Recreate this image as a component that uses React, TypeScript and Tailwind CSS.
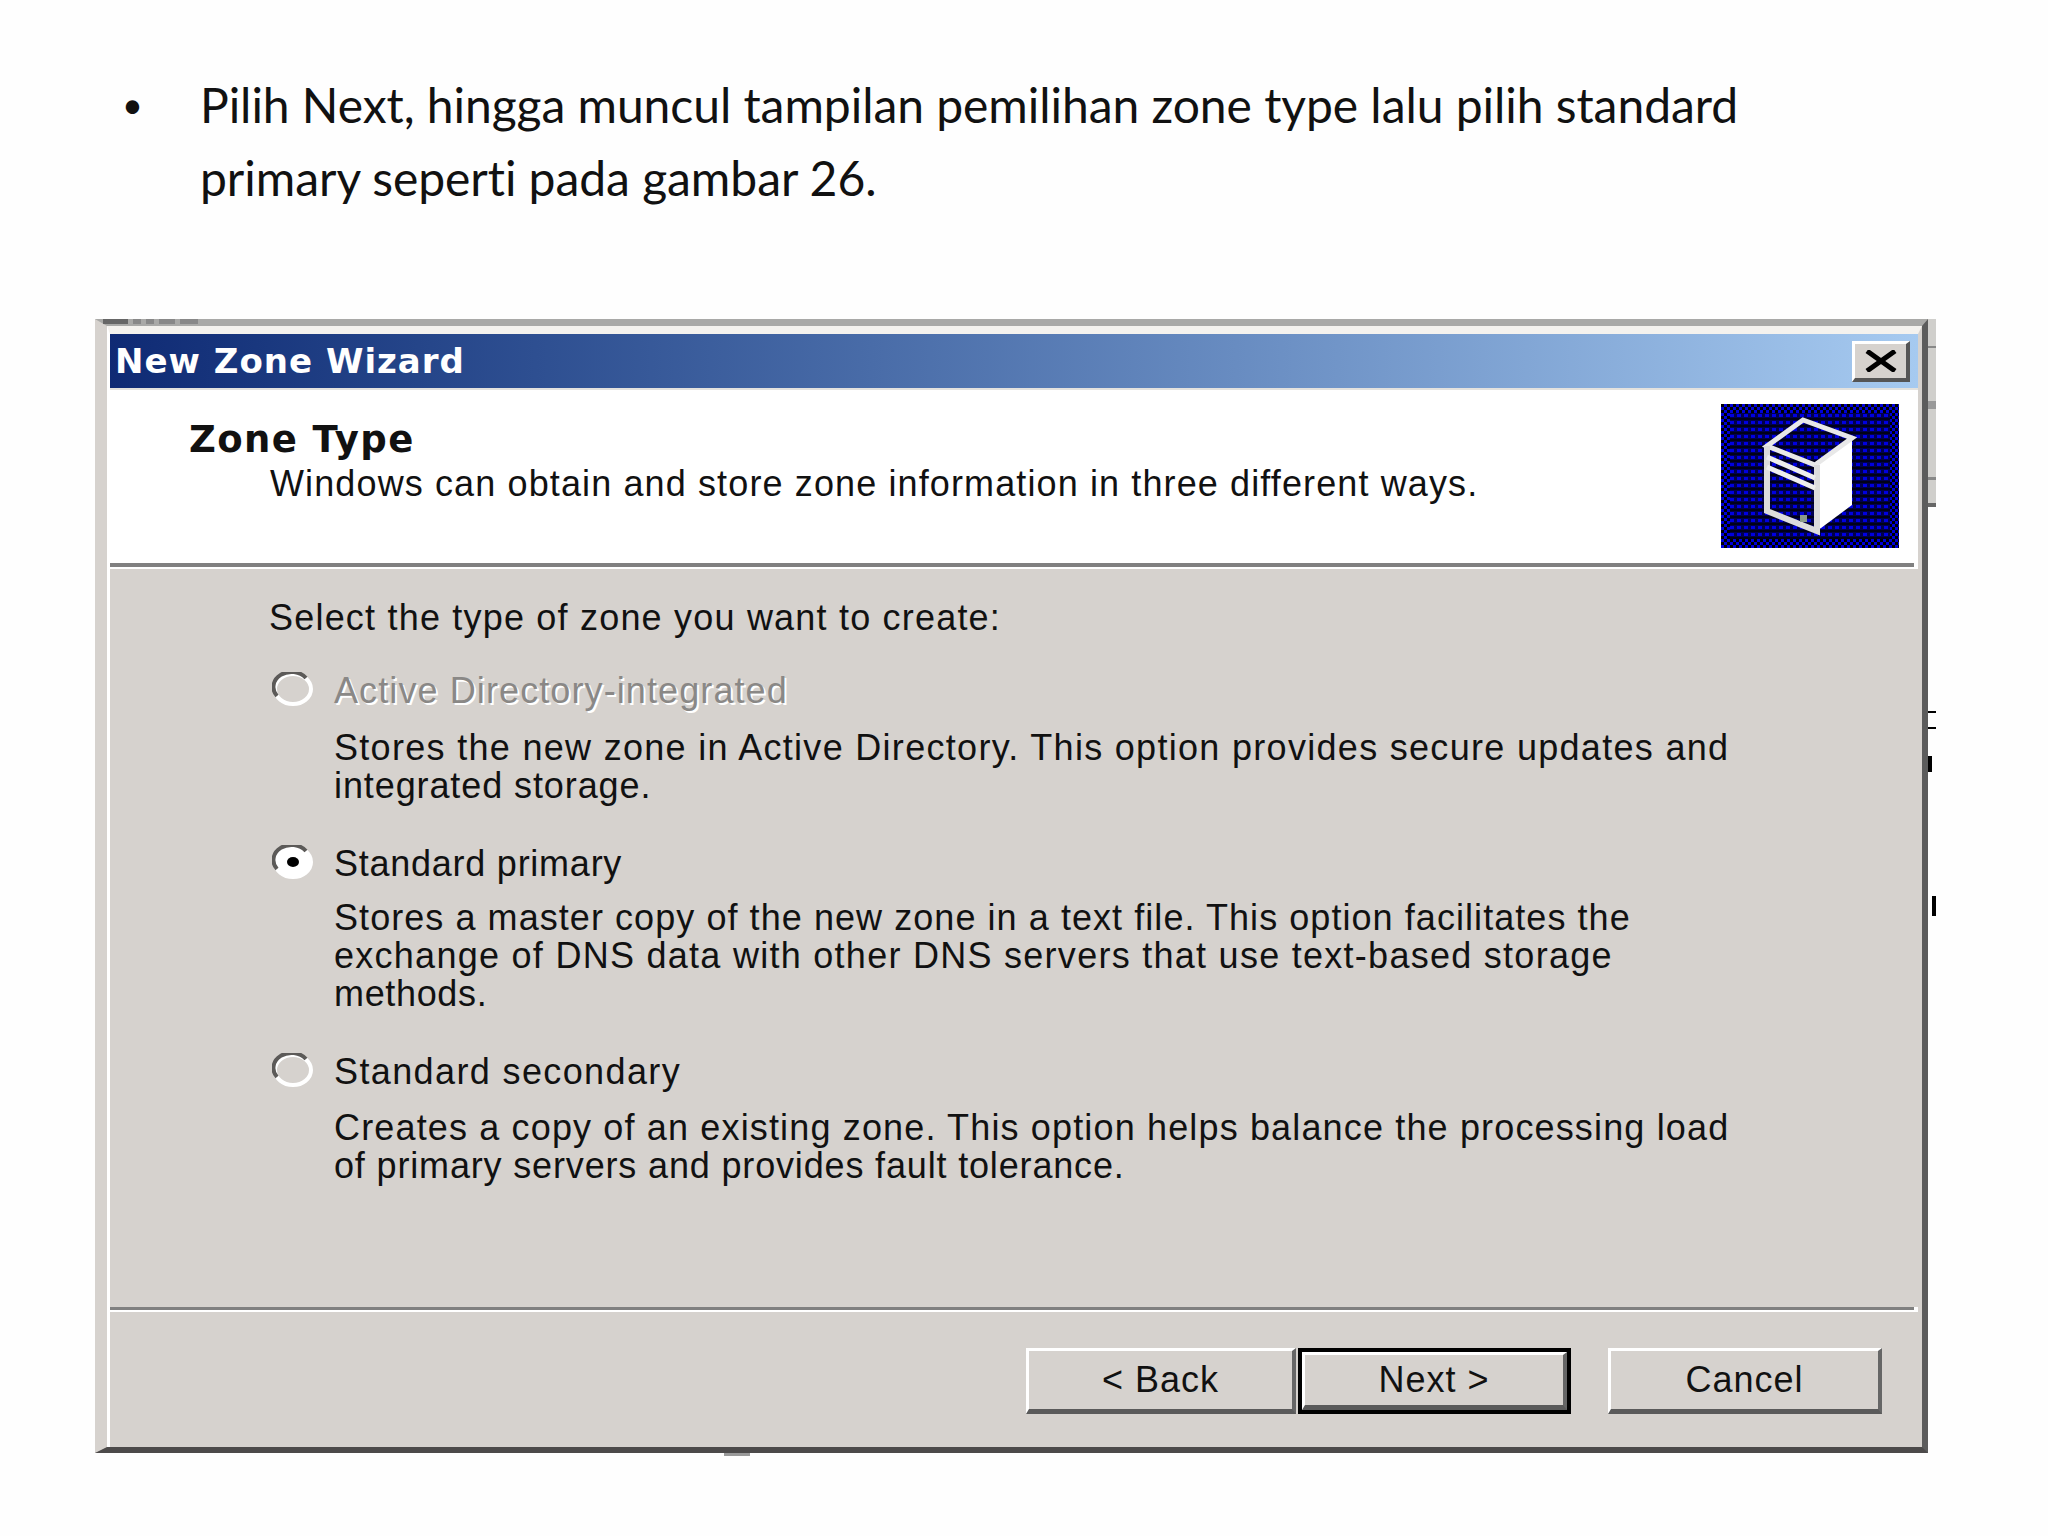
import React from "react";

const DIALOG_FONT = "font-['Liberation_Sans',sans-serif] text-[36px] leading-[38px] text-[#111] whitespace-nowrap";

function Radio({ checked }: { checked?: boolean }) {
  return (
    <svg width="42" height="34" viewBox="0 0 42 34" className="shrink-0 ml-[3px] mr-[20px]">
      <ellipse cx="21" cy="17" rx="18" ry="15" fill={checked ? "#fff" : "#d6d2ce"} stroke="#fff" strokeWidth="4" />
      <path d="M5 24 A18 15 0 0 1 34 6" fill="none" stroke="#5c5a58" strokeWidth="4" />
      {checked && <ellipse cx="21" cy="17" rx="6" ry="5" fill="#000" />}
    </svg>
  );
}

function ServerIcon() {
  return (
    <svg width="178" height="144" viewBox="0 0 178 144" className="shrink-0">
      <defs>
        <pattern id="edge" width="6" height="6" patternUnits="userSpaceOnUse">
          <rect width="6" height="6" fill="#0000d8" />
          <rect width="3" height="3" fill="#000" />
          <rect x="3" y="3" width="3" height="3" fill="#000" />
        </pattern>
        <pattern id="dither" width="7" height="7" patternUnits="userSpaceOnUse">
          <rect width="7" height="7" fill="#00004c" />
          <rect x="0" y="0" width="7" height="2" fill="#000018" />
          <rect x="2" y="3" width="4" height="3" fill="#0000e0" />
        </pattern>
      </defs>
      <rect width="178" height="144" fill="url(#edge)" />
      <rect x="9" y="9" width="160" height="126" fill="url(#dither)" />
      <polygon points="94,61 131,34 131,101 96,127" fill="#fff" />
      <path d="M46 42 L82 16 L131 34 L94 61 Z" fill="none" stroke="#e8e8e8" strokeWidth="5" />
      <path d="M46 42 L46 107 L96 127 L96 61" fill="none" stroke="#dcdcdc" strokeWidth="6" />
      <path d="M46 53 L94 74 M46 63 L94 84" stroke="#eee" strokeWidth="5" />
      <rect x="79" y="111" width="7" height="7" fill="#8a9a8a" />
    </svg>
  );
}

function WizardButton({ label, isDefault, className }: { label: string; isDefault?: boolean; className: string }) {
  return (
    <div className={`h-[66px] ${isDefault ? "border-[4px] border-black" : ""} ${className}`}>
      <div className="h-full flex items-center justify-center border-t-[3px] border-l-[3px] border-t-white border-l-white border-r-[4px] border-b-[5px] border-r-[#666] border-b-[#5a5a5a]">
        <span className={`${DIALOG_FONT} tracking-[1px]`}>{label}</span>
      </div>
    </div>
  );
}

export default function App() {
  return (
    <div className="w-[2048px] h-[1536px] bg-[#fefefe] overflow-hidden">
      {/* Slide text */}
      <div className="flex pl-[122px] pt-[68px] h-[319px] font-['Lato',sans-serif] text-[48px] tracking-[-0.05px] leading-[73px] text-[#111] [font-variant-ligatures:none]">
        <div className="w-[78px] text-[36px]">•</div>
        <div className="whitespace-nowrap">
          <div>Pilih Next, hingga muncul tampilan pemilihan zone type lalu pilih standard</div>
          <div>primary seperti pada gambar 26.</div>
        </div>
      </div>

      {/* Screenshot of the wizard dialog */}
      <div className="relative ml-[95px] w-[1833px] h-[1134px] border-t-[7px] border-t-[#a9a9a7] border-l-[12px] border-l-[#d6d2ce] border-r-[6px] border-r-[#5c5c5c] border-b-[6px] border-b-[#4c4a4a]">
        <div className="h-full flex flex-col border-t-[8px] border-t-[#f4f2ee] border-l-[3px] border-l-white border-r-[4px] border-r-[#d6d2ce]">
          {/* Title bar */}
          <div className="h-[54px] shrink-0 flex items-center justify-between pl-[5px] pr-[8px] bg-gradient-to-r from-[#0f2a74] to-[#a6caf0]">
            <span className="font-['DejaVu_Sans',sans-serif] font-bold text-[34px] tracking-[1px] leading-none text-white whitespace-nowrap">New Zone Wizard</span>
            <div className="w-[58px] h-[41px] flex items-center justify-center bg-[#d6d2ce] border-t-[3px] border-l-[3px] border-t-white border-l-white border-r-[4px] border-b-[4px] border-r-[#555] border-b-[#555]">
              <svg width="32" height="22" viewBox="0 0 32 22">
                <path d="M2 1 L30 21 M30 1 L2 21" stroke="#000" strokeWidth="5" />
              </svg>
            </div>
          </div>
          <div className="h-[2px] shrink-0 bg-[#e4e2de]" />

          {/* Header */}
          <div className="h-[173px] shrink-0 bg-white flex justify-between pr-[19px] pt-[14px]">
            <div className="pl-[79px] pt-[17px] whitespace-nowrap">
              <div className="font-['DejaVu_Sans',sans-serif] font-bold text-[37px] tracking-[1.4px] leading-[38px] text-[#111]">Zone Type</div>
              <div className={`${DIALOG_FONT} pl-[81px] mt-[6px] tracking-[1.12px]`}>Windows can obtain and store zone information in three different ways.</div>
            </div>
            <ServerIcon />
          </div>
          <div className="h-[4px] shrink-0 mr-[4px] bg-[#808080]" />
          <div className="h-[2px] shrink-0 bg-white" />

          {/* Zone type options */}
          <div className="flex-1 bg-[#d6d2ce] pl-[159px] pt-[30px]">
            <div className={`${DIALOG_FONT} tracking-[1.2px]`}>Select the type of zone you want to create:</div>

            <div className="flex mt-[35px]">
              <Radio />
              <div>
                <div className={`${DIALOG_FONT} text-[#8a8886]! tracking-[1.1px] [text-shadow:2px_2px_0_#fff]`}>Active Directory-integrated</div>
                <div className={`${DIALOG_FONT} mt-[19px] tracking-[1.3px]`}>Stores the new zone in Active Directory. This option provides secure updates and</div>
                <div className={`${DIALOG_FONT} tracking-[0.9px]`}>integrated storage.</div>
              </div>
            </div>

            <div className="flex mt-[40px]">
              <Radio checked />
              <div>
                <div className={`${DIALOG_FONT} tracking-[0.75px]`}>Standard primary</div>
                <div className={`${DIALOG_FONT} mt-[16px] tracking-[1.06px]`}>Stores a master copy of the new zone in a text file. This option facilitates the</div>
                <div className={`${DIALOG_FONT} tracking-[1.27px]`}>exchange of DNS data with other DNS servers that use text-based storage</div>
                <div className={`${DIALOG_FONT} tracking-[0.65px]`}>methods.</div>
              </div>
            </div>

            <div className="flex mt-[40px]">
              <Radio />
              <div>
                <div className={`${DIALOG_FONT} tracking-[1.38px]`}>Standard secondary</div>
                <div className={`${DIALOG_FONT} mt-[18px] tracking-[1.15px]`}>Creates a copy of an existing zone. This option helps balance the processing load</div>
                <div className={`${DIALOG_FONT} tracking-[0.84px]`}>of primary servers and provides fault tolerance.</div>
              </div>
            </div>
          </div>

          {/* Footer */}
          <div className="h-[3px] shrink-0 mr-[4px] bg-[#808080]" />
          <div className="h-[2px] shrink-0 mr-[3px] bg-white" />
          <div className="h-[135px] shrink-0 bg-[#d6d2ce] flex justify-end pt-[36px] pr-[36px]">
            <WizardButton label="< Back" className="w-[270px] mr-[2px]" />
            <WizardButton label="Next >" isDefault className="w-[273px] mr-[37px]" />
            <WizardButton label="Cancel" className="w-[274px]" />
          </div>
        </div>

        {/* Leftovers of the window behind the dialog */}
        <div className="absolute left-[-4px] top-[-7px] flex gap-[5px] h-[5px]">
          <div className="w-[25px] bg-[#666]" />
          <div className="w-[8px] bg-[#888]" />
          <div className="w-[8px] bg-[#888]" />
          <div className="w-[16px] bg-[#888]" />
          <div className="w-[18px] bg-[#888]" />
        </div>
        <div className="absolute right-[-14px] top-[-7px] w-[8px] h-[188px] bg-[#d0cfcc] border-b-[4px] border-b-[#666] flex flex-col">
          <div className="h-[29px] border-b-[2px] border-b-[#888]" />
          <div className="h-[61px] border-b-[8px] border-b-[#999]" />
          <div className="h-[71px] border-b-[3px] border-b-[#888]" />
        </div>
        <div className="absolute right-[-14px] top-[385px] w-[8px] h-[2px] bg-black" />
        <div className="absolute right-[-14px] top-[401px] w-[8px] h-[2px] bg-black" />
        <div className="absolute right-[-10px] top-[430px] w-[4px] h-[16px] bg-black" />
        <div className="absolute right-[-14px] top-[570px] w-[4px] h-[20px] bg-black" />
        <div className="absolute left-[617px] bottom-[-9px] w-[26px] h-[3px] bg-[#999]" />
      </div>
    </div>
  );
}
